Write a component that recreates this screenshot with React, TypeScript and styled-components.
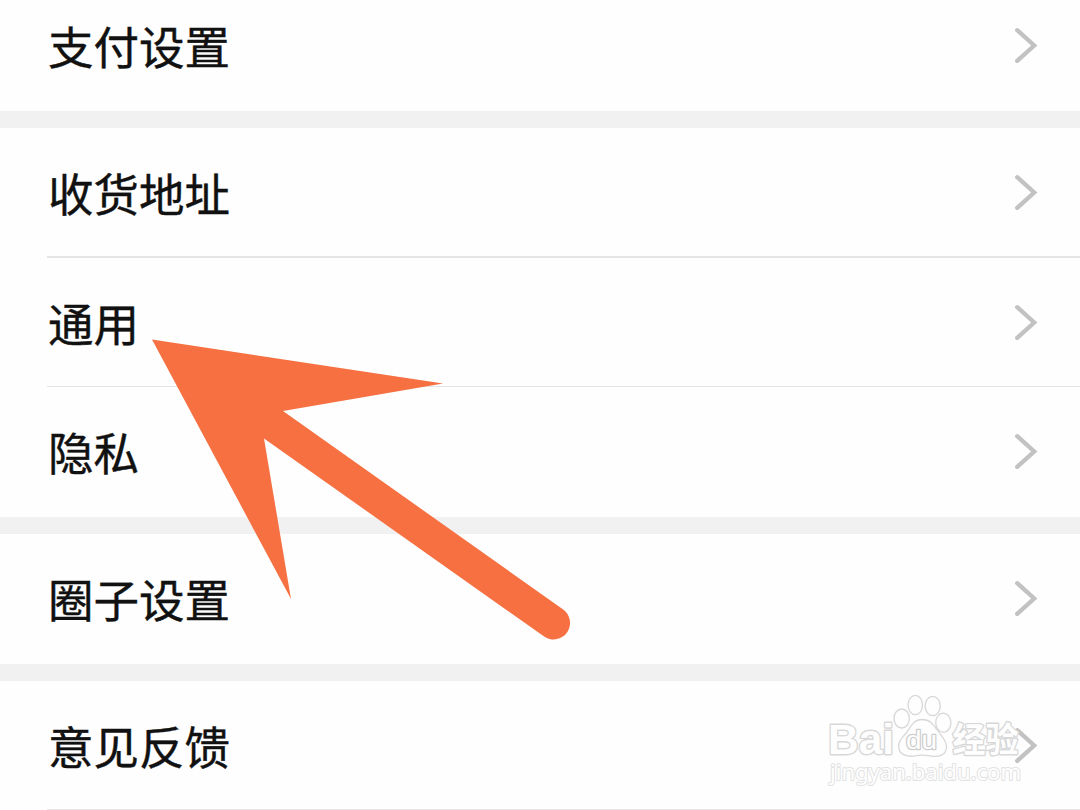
import styled, { createGlobalStyle } from 'styled-components';

interface SettingItem {
    label: string;
    height: number;
    divider?: number;
}

const GROUPS: SettingItem[][] = [
    [{ label: '支付设置', height: 111 }],
    [
        { label: '收货地址', height: 130, divider: 2 },
        { label: '通用', height: 129, divider: 1 },
        { label: '隐私', height: 130 }
    ],
    [{ label: '圈子设置', height: 130 }],
    [{ label: '意见反馈', height: 129, divider: 1 }]
];

export default function App() {
    return (
        <Page>
            <GlobalStyle />
            {GROUPS.map((group, i) => (
                <Group key={i}>
                    {group.map((item) => (
                        <Row key={item.label} height={item.height}>
                            <Content divider={item.divider ?? 0}>
                                <Label>{item.label}</Label>
                                <Chevron />
                            </Content>
                        </Row>
                    ))}
                </Group>
            ))}
            <Arrow />
            <Watermark />
        </Page>
    );
}

const Chevron = () => (
    <ChevronIcon viewBox="0 0 24 38">
        <path d="M3.2 3.2 L20.2 18.5 L3.2 33.8" />
    </ChevronIcon>
);

const Arrow = () => (
    <ArrowIcon viewBox="0 0 420 302">
        <path d="M0 0.5 L291 44.5 L131 72 L410.5 270 A16.3 16.3 0 0 1 392.5 297.8 L112 99.5 L139 260 Z" />
    </ArrowIcon>
);

const Watermark = () => (
    <WatermarkIcon viewBox="0 0 210 100">
        <WatermarkText x="4" y="60" fontSize="43" fontWeight="700" textLength="66" lengthAdjust="spacingAndGlyphs">
            Bai
        </WatermarkText>
        <ellipse cx="77.7" cy="24.5" rx="7.7" ry="9.5" />
        <ellipse cx="91.3" cy="11" rx="7.2" ry="9.7" />
        <ellipse cx="108.7" cy="12" rx="7.6" ry="9.6" />
        <ellipse cx="119.3" cy="28.7" rx="7.6" ry="9.6" />
        <path d="M98 25.5 C90 25.5 87 32 83 38 C78 44 73 48 75 55 C77 62 85 63 91 61.8 C96 60.8 101 60.8 106 61.8 C114 63.5 122 62 122.5 53 C122.5 46 118 43 113.5 36.5 C109 30 106 25.5 98 25.5 Z" />
        <PawText x="82" y="55" fontSize="26" fontWeight="400" textLength="31" lengthAdjust="spacingAndGlyphs">
            du
        </PawText>
        <WatermarkText x="128.5" y="58" fontSize="34" fontWeight="700" textLength="66" lengthAdjust="spacingAndGlyphs">
            经验
        </WatermarkText>
        <UrlText x="6" y="86" fontSize="22.5" fontWeight="400" textLength="191" lengthAdjust="spacingAndGlyphs">
            jingyan.baidu.com
        </UrlText>
    </WatermarkIcon>
);

const GlobalStyle = createGlobalStyle`
    body {
        margin: 0;
        overflow: hidden;
        background-color: #fefefe;
    }
`;

const Page = styled.main`
    position: relative;
    display: flex;
    flex-direction: column;
    gap: 17px;
    width: 1080px;
    height: 810px;
    overflow: hidden;
    background-color: #f1f1f1;
    font-family: 'Noto Sans CJK SC', sans-serif;
`;

const Group = styled.section`
    flex-shrink: 0;
    background-color: #fefefe;
`;

const Row = styled.div<{ height: number }>`
    display: flex;
    box-sizing: border-box;
    height: ${(props) => props.height}px;
    padding-left: 47px;
    align-items: flex-end;
    overflow: hidden;
`;

const Content = styled.div<{ divider: number }>`
    display: flex;
    flex: 1;
    box-sizing: border-box;
    height: 130px;
    padding: ${(props) => (props.divider === 1 ? 2 : 0)}px 42px 0 1px;
    justify-content: space-between;
    align-items: center;
    box-shadow: inset 0 -${(props) => props.divider}px #e5e5e5;
`;

const Label = styled.span`
    margin-bottom: 3px;
    color: #111;
    font-size: 45.5px;
    line-height: 66px;
    white-space: nowrap;
    -webkit-text-stroke: 0.4px #111;
`;

const ChevronIcon = styled.svg`
    width: 24px;
    height: 38px;
    fill: none;
    stroke: #c2c2c2;
    stroke-width: 4.3;
    stroke-linecap: round;
    stroke-linejoin: miter;
`;

const ArrowIcon = styled.svg`
    position: absolute;
    left: 152px;
    top: 339px;
    width: 420px;
    height: 302px;
    fill: #f67041;
`;

const WatermarkIcon = styled.svg`
    position: absolute;
    left: 824px;
    top: 694px;
    width: 210px;
    height: 100px;
    fill: #fefefe;
    stroke: #d8d8d8;
    stroke-width: 1.3;
`;

const WatermarkText = styled.text`
    font-family: 'Liberation Sans', 'Noto Sans CJK SC', sans-serif;
    paint-order: stroke;
    stroke-width: 2.8;
    stroke-linejoin: round;
`;

const PawText = styled(WatermarkText)`
    stroke: #cdcdcd;
    stroke-width: 2.4;
`;

const UrlText = styled(WatermarkText)`
    font-family: 'Noto Sans', sans-serif;
    stroke: #e2e2e2;
    stroke-width: 2;
`;
